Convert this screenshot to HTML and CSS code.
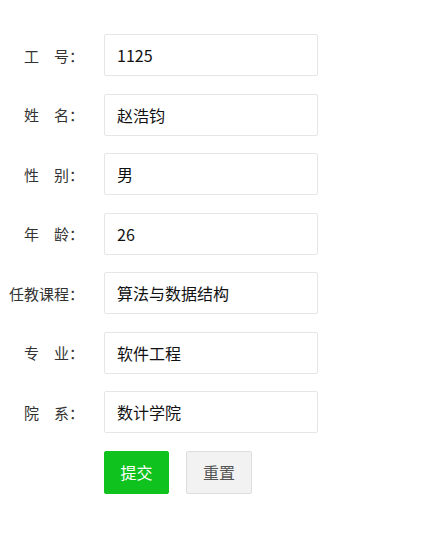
FILE: index.html
```html
<!DOCTYPE html>
<html lang="zh">
<head>
<meta charset="utf-8">
<link rel="stylesheet" href="styles.css">
</head>
<body>
<form class="form">
  <div class="row"><label class="label">工　号：</label><div class="input">1125</div></div>
  <div class="row"><label class="label">姓　名：</label><div class="input">赵浩钧</div></div>
  <div class="row"><label class="label">性　别：</label><div class="input">男</div></div>
  <div class="row"><label class="label">年　龄：</label><div class="input">26</div></div>
  <div class="row"><label class="label">任教课程：</label><div class="input">算法与数据结构</div></div>
  <div class="row"><label class="label">专　业：</label><div class="input">软件工程</div></div>
  <div class="row"><label class="label">院　系：</label><div class="input">数计学院</div></div>
  <div class="actions">
    <button type="button" class="btn btn-primary">提交</button>
    <button type="button" class="btn btn-default">重置</button>
  </div>
</form>
</body>
</html>
```
FILE: styles.css
```css
html, body {
  margin: 0;
  padding: 0;
  background: #fff;
}
body {
  font-family: "Noto Sans CJK SC", "Noto Sans", sans-serif;
  color: #333;
}
.form {
  padding-top: 34px;
  display: flex;
  flex-direction: column;
  gap: 17.5px;
}
.row {
  display: flex;
  align-items: center;
}
.label {
  width: 84px;
  text-align: right;
  font-size: 15px;
  color: #333;
  margin-right: 20px;
  white-space: nowrap;
}
.input {
  box-sizing: border-box;
  width: 214px;
  height: 42px;
  border: 1px solid #e6e6e6;
  border-radius: 2px;
  padding-left: 12px;
  font-size: 16px;
  color: #111;
  display: flex;
  align-items: center;
}
.actions {
  display: flex;
  gap: 17px;
  padding-left: 104px;
}
.btn {
  box-sizing: border-box;
  height: 43px;
  width: 65px;
  border-radius: 2px;
  font-family: inherit;
  font-size: 16px;
  padding: 0;
  cursor: pointer;
}
.btn-primary {
  background: #0fc21d;
  border: 1px solid #0fc21d;
  color: #fff;
}
.btn-default {
  width: 66px;
  background: #f2f2f2;
  border: 1px solid #dedede;
  color: #555;
}
```
